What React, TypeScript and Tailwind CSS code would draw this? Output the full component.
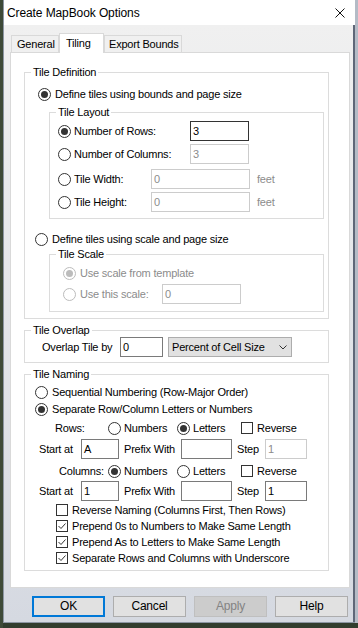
import React from "react";

const FONT = "font-['Liberation_Sans',Arial,sans-serif]";

function Radio({ checked = false, disabled = false }: { checked?: boolean; disabled?: boolean }) {
  return (
    <span
      className={`flex h-[13px] w-[13px] shrink-0 items-center justify-center rounded-full border bg-white ${
        disabled ? "border-[#bcbcbc]" : "border-[#333333]"
      }`}
    >
      {checked ? (
        <span className={`h-[7px] w-[7px] rounded-full ${disabled ? "bg-[#bcbcbc]" : "bg-[#333333]"}`} />
      ) : null}
    </span>
  );
}

function Check({ checked = false }: { checked?: boolean }) {
  return (
    <span className="flex h-[12px] w-[12px] shrink-0 items-center justify-center border border-[#333333] bg-white">
      {checked ? (
        <svg width="10" height="10" viewBox="0 0 10 10">
          <path d="M1.5 5 L4 7.5 L8.5 2.5" fill="none" stroke="#333333" strokeWidth="1" />
        </svg>
      ) : null}
    </span>
  );
}

function TextBox({
  value = "",
  className = "",
  state = "normal",
}: {
  value?: string;
  className?: string;
  state?: "normal" | "focus" | "disabled";
}) {
  const look =
    state === "focus"
      ? "border-[#333333] text-black"
      : state === "disabled"
      ? "border-[#cccccc] text-[#8c8c8c]"
      : "border-[#7a7a7a] text-black";
  return (
    <span className={`flex h-[20px] shrink-0 items-center border bg-white pl-[2px] ${look} ${className}`}>
      {value}
    </span>
  );
}

function Group({
  title,
  className = "",
  children,
}: {
  title: string;
  className?: string;
  children: React.ReactNode;
}) {
  return (
    <fieldset className={`m-0 min-w-0 border border-[#dcdcdc] px-0 ${className}`}>
      <legend className="ml-[6px] px-[2px] leading-[13px]">{title}</legend>
      {children}
    </fieldset>
  );
}

function Button({ label, variant = "normal" }: { label: string; variant?: "normal" | "default" | "disabled" }) {
  const look =
    variant === "default"
      ? "border-2 border-[#0078d7] bg-[#e1e1e1] text-black"
      : variant === "disabled"
      ? "border border-[#bfbfbf] bg-[#cccccc] text-[#838383]"
      : "border border-[#adadad] bg-[#e1e1e1] text-black";
  return (
    <div className={`flex h-[21px] w-[73px] items-center justify-center text-[12px] ${look}`}>{label}</div>
  );
}

export default function App() {
  return (
    <div className={`flex h-[628px] w-[358px] overflow-hidden bg-[#323d2e] ${FONT}`}>
      <div className="h-full w-[3px] shrink-0 bg-[#3e4a38]" />

      <div className="flex h-[623px] w-[352px] shrink-0 flex-col border-l border-b border-[#8d96a3]">
        {/* title bar */}
        <div className="flex h-[25px] shrink-0 items-center justify-between bg-white pl-[3px] pr-[10px]">
          <span className="text-[12px] tracking-[-0.1px] text-black">Create MapBook Options</span>
          <svg width="10" height="10" viewBox="0 0 10 10">
            <path d="M0.5 0.5 L9.5 9.5 M9.5 0.5 L0.5 9.5" stroke="#111111" strokeWidth="1" />
          </svg>
        </div>

        {/* body */}
        <div className="flex flex-1 flex-col border-r-2 border-[#5f6778] bg-linear-to-b from-[#f0f0f0] to-[#d5d9e1] pt-[8px] text-[11px] leading-[13px] tracking-[-0.2px] text-black">
          {/* tabs */}
          <div className="ml-[7px] flex h-[19px] items-end">
            <div className="h-[17px] w-[48px] border border-b-0 border-[#d9d9d9] bg-[#f0f0f0] pl-[5px] pt-[2px]">
              General
            </div>
            <div className="relative z-10 -mb-px h-[20px] w-[45px] border border-b-0 border-[#d9d9d9] bg-white pl-[6px] pt-[3px]">
              Tiling
            </div>
            <div className="h-[17px] w-[78px] border border-b-0 border-[#d9d9d9] bg-[#f0f0f0] pl-[4px] pt-[2px]">
              Export Bounds
            </div>
          </div>

          {/* panel */}
          <div className="ml-[6px] h-[536px] w-[340px] border border-[#d9d9d9] bg-white pl-[13px] pt-[13px]">
            <Group title="Tile Definition" className="w-[305px] pb-[6px]">
              <div className="mt-[7px] flex h-[16px] items-center gap-[4px] pl-[13px]">
                <Radio checked />
                <span>Define tiles using bounds and page size</span>
              </div>

              <Group title="Tile Layout" className="mt-[4px] ml-[24px] w-[275px] pb-[6px]">
                <div className="mt-[2px] flex h-[20px] items-center pl-[8px]">
                  <span className="flex w-[132px] items-center gap-[3px]">
                    <Radio checked />
                    <span>Number of Rows:</span>
                  </span>
                  <TextBox value="3" state="focus" className="w-[59px]" />
                </div>
                <div className="mt-[3px] flex h-[20px] items-center pl-[8px]">
                  <span className="flex w-[132px] items-center gap-[3px]">
                    <Radio />
                    <span>Number of Columns:</span>
                  </span>
                  <TextBox value="3" state="disabled" className="w-[59px]" />
                </div>
                <div className="mt-[5px] flex h-[20px] items-center pl-[8px]">
                  <span className="flex w-[93px] items-center gap-[3px]">
                    <Radio />
                    <span>Tile Width:</span>
                  </span>
                  <TextBox value="0" state="disabled" className="w-[99px]" />
                  <span className="ml-[7px] text-[#8c8c8c]">feet</span>
                </div>
                <div className="mt-[3px] flex h-[20px] items-center pl-[8px]">
                  <span className="flex w-[93px] items-center gap-[3px]">
                    <Radio />
                    <span>Tile Height:</span>
                  </span>
                  <TextBox value="0" state="disabled" className="w-[99px]" />
                  <span className="ml-[7px] text-[#8c8c8c]">feet</span>
                </div>
              </Group>

              <div className="mt-[12px] flex h-[16px] items-center gap-[4px] pl-[10px]">
                <Radio />
                <span>Define tiles using scale and page size</span>
              </div>

              <Group title="Tile Scale" className="mt-[1px] ml-[24px] w-[275px] pb-[7px]">
                <div className="mt-[4px] flex h-[16px] items-center gap-[4px] pl-[13px] text-[#8c8c8c]">
                  <Radio checked disabled />
                  <span>Use scale from template</span>
                </div>
                <div className="mt-[3px] flex h-[20px] items-center pl-[13px]">
                  <span className="flex w-[99px] items-center gap-[4px] text-[#8c8c8c]">
                    <Radio disabled />
                    <span>Use this scale:</span>
                  </span>
                  <TextBox value="0" state="disabled" className="w-[79px]" />
                </div>
              </Group>
            </Group>

            <Group title="Tile Overlap" className="mt-[5px] w-[305px] pb-[5px]">
              <div className="flex h-[20px] items-center pl-[17px]">
                <span className="w-[78px]">Overlap Tile by</span>
                <TextBox value="0" className="w-[43px]" />
                <div className="ml-[5px] flex h-[20px] w-[124px] items-center justify-between border border-[#adadad] bg-[#e1e1e1] pl-[3px] pr-[4px]">
                  <span>Percent of Cell Size</span>
                  <svg width="8" height="5" viewBox="0 0 8 5">
                    <path d="M0.5 0.5 L4 4 L7.5 0.5" fill="none" stroke="#333333" strokeWidth="1" />
                  </svg>
                </div>
              </div>
            </Group>

            <Group title="Tile Naming" className="mt-[5px] w-[305px] pb-[4px]">
              <div className="mt-[3px] flex h-[16px] items-center gap-[4px] pl-[10px]">
                <Radio />
                <span>Sequential Numbering (Row-Major Order)</span>
              </div>
              <div className="mt-[1px] flex h-[16px] items-center gap-[4px] pl-[10px]">
                <Radio checked />
                <span>Separate Row/Column Letters or Numbers</span>
              </div>

              <div className="mt-[3px] flex h-[16px] items-center pl-[30px]">
                <span className="w-[53px]">Rows:</span>
                <span className="flex w-[69px] items-center gap-[3px]">
                  <Radio />
                  <span>Numbers</span>
                </span>
                <span className="flex w-[64px] items-center gap-[3px]">
                  <Radio checked />
                  <span>Letters</span>
                </span>
                <span className="flex items-center gap-[4px]">
                  <Check />
                  <span>Reverse</span>
                </span>
              </div>

              <div className="mt-[3px] flex h-[20px] items-center pl-[14px]">
                <span className="w-[42px]">Start at</span>
                <TextBox value="A" className="w-[38px]" />
                <span className="ml-[5px] w-[57px]">Prefix With</span>
                <TextBox className="w-[51px]" />
                <span className="ml-[5px] w-[28px]">Step</span>
                <TextBox value="1" state="disabled" className="w-[42px]" />
              </div>

              <div className="mt-[4px] flex h-[16px] items-center pl-[34px]">
                <span className="w-[49px] whitespace-nowrap">Columns:</span>
                <span className="flex w-[69px] items-center gap-[3px]">
                  <Radio checked />
                  <span>Numbers</span>
                </span>
                <span className="flex w-[64px] items-center gap-[3px]">
                  <Radio />
                  <span>Letters</span>
                </span>
                <span className="flex items-center gap-[4px]">
                  <Check />
                  <span>Reverse</span>
                </span>
              </div>

              <div className="mt-[2px] flex h-[20px] items-center pl-[14px]">
                <span className="w-[42px]">Start at</span>
                <TextBox value="1" className="w-[38px]" />
                <span className="ml-[5px] w-[57px]">Prefix With</span>
                <TextBox className="w-[51px]" />
                <span className="ml-[5px] w-[28px]">Step</span>
                <TextBox value="1" className="w-[42px]" />
              </div>

              <div className="mt-[1px] flex h-[16px] items-center gap-[4px] pl-[31px]">
                <Check />
                <span>Reverse Naming (Columns First, Then Rows)</span>
              </div>
              <div className="flex h-[16px] items-center gap-[4px] pl-[31px]">
                <Check checked />
                <span>Prepend 0s to Numbers to Make Same Length</span>
              </div>
              <div className="flex h-[16px] items-center gap-[4px] pl-[31px]">
                <Check checked />
                <span>Prepend As to Letters to Make Same Length</span>
              </div>
              <div className="flex h-[16px] items-center gap-[4px] pl-[31px]">
                <Check checked />
                <span>Separate Rows and Columns with Underscore</span>
              </div>
            </Group>
          </div>

          {/* buttons */}
          <div className="mt-[8px] flex gap-[8px] pl-[28px]">
            <Button label="OK" variant="default" />
            <Button label="Cancel" />
            <Button label="Apply" variant="disabled" />
            <Button label="Help" />
          </div>
        </div>
      </div>

      <div className="flex h-[623px] w-[3px] shrink-0 bg-[#b4bbc6]" />
    </div>
  );
}
